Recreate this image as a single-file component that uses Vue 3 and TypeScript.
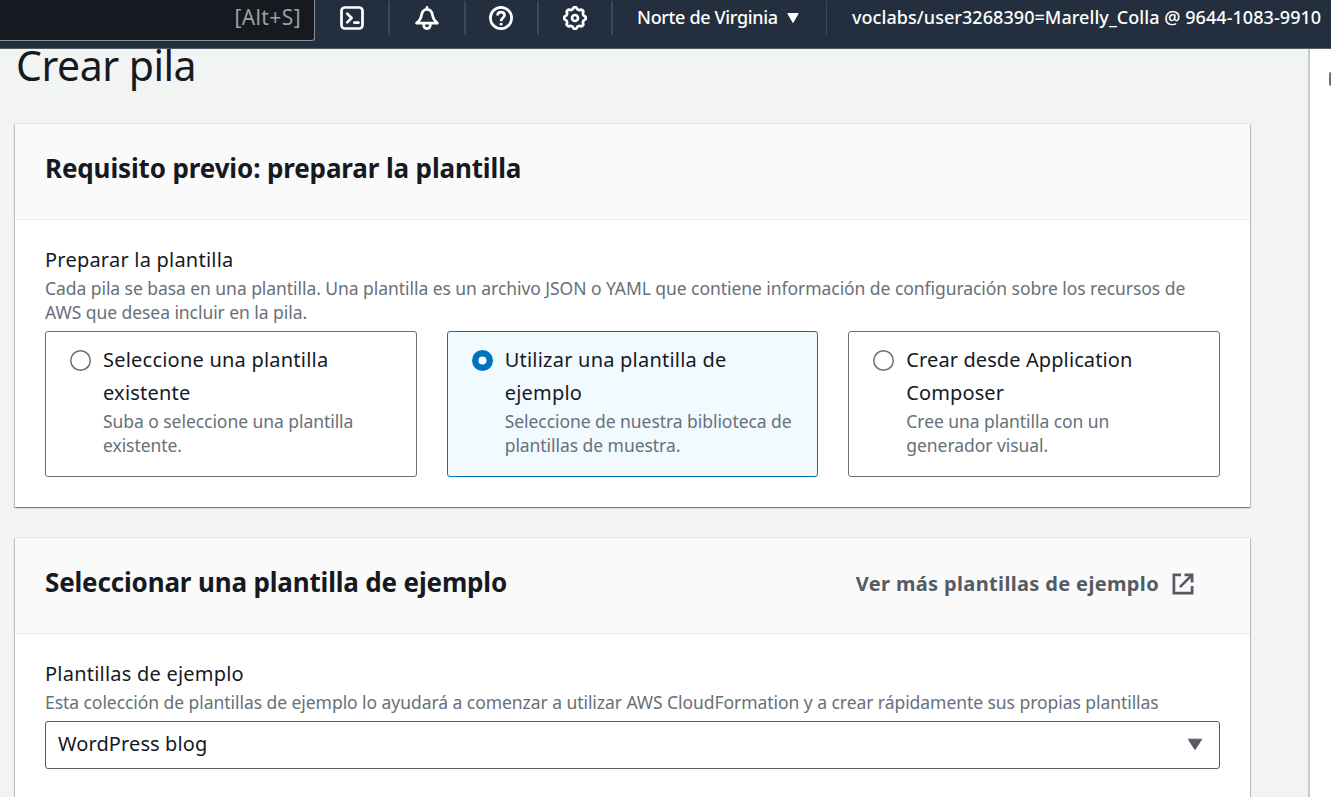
<script setup lang="ts">
import { ref } from 'vue'

interface Option {
  id: string
  title: string[]
  description: string[]
}

const description: string[] = [
  'Cada pila se basa en una plantilla. Una plantilla es un archivo JSON o YAML que contiene información de configuración sobre los recursos de',
  'AWS que desea incluir en la pila.',
]

const options: Option[] = [
  {
    id: 'existing',
    title: ['Seleccione una plantilla', 'existente'],
    description: ['Suba o seleccione una plantilla', 'existente.'],
  },
  {
    id: 'sample',
    title: ['Utilizar una plantilla de', 'ejemplo'],
    description: ['Seleccione de nuestra biblioteca de', 'plantillas de muestra.'],
  },
  {
    id: 'composer',
    title: ['Crear desde Application', 'Composer'],
    description: ['Cree una plantilla con un', 'generador visual.'],
  },
]

const selected = ref('sample')

// Outline of the settings gear: a ring with eight shallow rounded teeth.
const gear = (() => {
  const points: string[] = []
  for (let i = 0; i < 96; i++) {
    const a = (i / 96) * Math.PI * 2
    const r = 9.8 + 0.95 * Math.tanh(2.2 * Math.cos(8 * a))
    points.push(`${(12 + r * Math.cos(a)).toFixed(2)} ${(12 + r * Math.sin(a)).toFixed(2)}`)
  }
  return `M${points.join('L')}Z`
})()
</script>

<template>
  <div class="page">
    <header class="nav">
      <div class="search"><span class="shortcut">[Alt+S]</span></div>
      <div class="tool t1">
        <svg width="24" height="24" viewBox="0 0 24 24" class="line">
          <rect x="1.5" y="1.5" width="21" height="21" rx="3.2" />
          <path d="M7.2 7.600 11.600 12 7.2 16.400M14.300 16.600h4.200" />
        </svg>
      </div>
      <div class="tool t2">
        <svg width="24" height="24" viewBox="0 0 24 24" class="line">
          <path d="M12 1.400v1.800M1.600 17.200h20.800c-4-3-4.400-5.100-5-8.400C16.800 5.200 15 3.300 12 3.300S7.200 5.200 6.600 8.800c-.6 3.300-1 5.400-5 8.400z" />
          <path d="M8.700 18.300c0 2.700 1.100 4.300 3.300 4.300s3.300-1.600 3.300-4.300" />
        </svg>
      </div>
      <div class="tool t3">
        <svg width="24" height="24" viewBox="0 0 24 24" class="line">
          <circle cx="12" cy="12" r="10.600" />
          <path d="M8.600 9.500C8.600 7.200 10 6.200 12 6.200s3.500 1.200 3.500 3.100c0 2.400-3.400 2.800-3.400 5.900" stroke-linecap="butt" />
          <path d="M10.700 18.200h2.800" stroke-linecap="butt" stroke-width="2.400" />
        </svg>
      </div>
      <div class="tool t4">
        <svg width="24" height="24" viewBox="0 0 24 24" class="line">
          <path :d="gear" />
          <circle cx="12" cy="12" r="3" />
        </svg>
      </div>
      <div class="region">
        <span class="region-name">Norte de Virginia</span>
        <svg width="12" height="10" viewBox="0 0 12 10"><path d="M.8.500h10.400L6 9.500z" fill="#fff" stroke="#fff" stroke-linejoin="round" /></svg>
      </div>
      <div class="account"><span>voclabs/user3268390=Marelly_Colla @ 9644-1083-9910</span></div>
    </header>

    <div class="body">
      <main class="content">
        <h1>Crear pila</h1>

        <section class="card first">
          <div class="card-head"><h2 class="h-a">Requisito previo: preparar la plantilla</h2></div>
          <div class="card-body">
            <div class="label">Preparar la plantilla</div>
            <div v-for="(line, i) in description" :key="i" class="hint">{{ line }}</div>
            <div class="options">
              <div
                v-for="o in options"
                :key="o.id"
                class="option"
                :class="[o.id, { active: selected === o.id }]"
                @click="selected = o.id"
              >
                <span class="radio"></span>
                <div>
                  <div v-for="t in o.title" :key="t" class="title">{{ t }}</div>
                  <div v-for="t in o.description" :key="t" class="hint">{{ t }}</div>
                </div>
              </div>
            </div>
          </div>
        </section>

        <section class="card">
          <div class="card-head">
            <h2 class="h-b">Seleccionar una plantilla de ejemplo</h2>
            <a class="more">
              <span>Ver más plantillas de ejemplo</span>
              <svg width="24" height="24" viewBox="0 0 24 24" fill="none" stroke="#545b64" stroke-width="2.700">
                <path d="M10 2.900H2.900v18.200h18.200V14M13.500 2.900h7.600v7.600M20.600 3.400 8.900 15.100" />
              </svg>
            </a>
          </div>
          <div class="card-body">
            <div class="label">Plantillas de ejemplo</div>
            <div class="hint">Esta colección de plantillas de ejemplo lo ayudará a comenzar a utilizar AWS CloudFormation y a crear rápidamente sus propias plantillas</div>
            <div class="select">
              <span>WordPress blog</span>
              <svg width="16" height="13" viewBox="0 0 16 13"><path d="M1.300 1.200h13.400L8 11.700z" fill="#545b64" stroke="#545b64" stroke-linejoin="round" /></svg>
            </div>
          </div>
        </section>
      </main>
      <aside class="panel"><i class="peek"></i></aside>
    </div>
  </div>
</template>

<style>
body {
  overflow: hidden;
  background: #f2f3f3;
}
</style>

<style scoped>
* {
  box-sizing: border-box;
}
.page {
  height: 797px;
  display: flex;
  flex-direction: column;
  overflow: hidden;
  color: #16191f;
  font-family: 'Noto Sans', 'Open Sans', sans-serif;
  font-size: 20px;
  white-space: nowrap;
}
.nav {
  height: 49px;
  flex: none;
  display: flex;
  align-items: flex-start;
  background: #232f3e;
  border-bottom: 1px solid #545b64;
  color: #fff;
}
.search {
  width: 315px;
  height: 41px;
  flex: none;
  padding: 4px 13px 0 0;
  text-align: right;
  background: #161a20;
  border: solid #879596;
  border-width: 0 1px 1px 0;
  border-radius: 0 0 3px 0;
}
.shortcut {
  color: #95a5a6;
  font-size: 21px;
  line-height: 27px;
  letter-spacing: 0.4px;
}
.tool,
.region {
  height: 34px;
  margin-top: 1px;
  flex: none;
  border-right: 2px solid #414750;
}
.tool {
  padding: 5px 0 0 24px;
}
.tool svg {
  display: block;
}
.line {
  fill: none;
  stroke: #fff;
  stroke-width: 2.700;
  stroke-linecap: round;
  stroke-linejoin: round;
}
.t1 {
  width: 75px;
  padding-left: 25px;
}
.t2 {
  width: 76px;
  padding-left: 25px;
}
.t3 {
  width: 73px;
  padding-left: 23px;
}
.t4 {
  width: 74px;
}
.region {
  width: 214px;
  border-right-width: 1px;
  padding: 0 0 0 24px;
  display: flex;
  align-items: center;
}
.region-name {
  width: 150px;
  padding-bottom: 2px;
  font-size: 18px;
  font-weight: 500;
  letter-spacing: -0.340px;
}
.account {
  padding-left: 25px;
  font-size: 18px;
  font-weight: 500;
  line-height: 34px;
  letter-spacing: 0.060px;
}
.body {
  flex: 1;
  min-height: 0;
  display: flex;
  background: #f2f3f3;
}
.content {
  width: 1308px;
  flex: none;
  padding-left: 15px;
}
h1,
h2 {
  margin: 0;
}
h1 {
  height: 75px;
  padding-left: 1px;
  font-size: 41px;
  font-weight: 400;
  line-height: 32px;
  letter-spacing: -0.5px;
}
.card {
  width: 1235px;
  height: 383px;
  margin-bottom: 31px;
  background: #fff;
  box-shadow: 0 1px 1px 0 rgba(0, 28, 36, 0.3), 1px 1px 1px 0 rgba(0, 28, 36, 0.15), -1px 1px 1px 0 rgba(0, 28, 36, 0.15), 0 0 1px 0 rgba(0, 28, 36, 0.3);
}
.card-head {
  height: 96px;
  padding: 0 55px 4px 30px;
  display: flex;
  align-items: center;
  justify-content: space-between;
  background: #fafafa;
  border-bottom: 1px solid #eaeded;
}
h2 {
  padding-bottom: 3px;
  font-size: 26px;
  font-weight: 700;
}
.h-a {
  letter-spacing: -0.130px;
}
.h-b {
  letter-spacing: -0.160px;
}
.card-body {
  padding: 23px 30px 0;
}
.label,
.title {
  font-size: 20px;
  line-height: 33px;
  letter-spacing: 0.220px;
}
.composer .title {
  letter-spacing: 0.100px;
}
.hint {
  color: #687078;
  font-size: 17.500px;
  line-height: 24px;
  letter-spacing: -0.056px;
}
.options {
  display: flex;
  gap: 30px;
  margin-top: 7px;
}
.option {
  flex: 1;
  height: 146px;
  padding: 11px 24px 0;
  display: flex;
  gap: 12px;
  border: 1px solid #687078;
  border-radius: 3px;
}
.option.active {
  border-color: #0073bb;
  background: #f1faff;
}
.radio {
  width: 21px;
  height: 21px;
  flex: none;
  margin-top: 7px;
  border-radius: 50%;
  background: #fff;
  box-shadow: inset 0 0 0 1.500px #687078;
}
.active .radio {
  box-shadow: inset 0 0 0 6.500px #0073bb;
}
.more {
  display: flex;
  align-items: center;
  gap: 12px;
  color: #545b64;
  font-size: 20px;
  font-weight: 700;
  letter-spacing: 0.350px;
}
.select {
  height: 48px;
  margin-top: 7px;
  padding: 0 16px 3px 12px;
  display: flex;
  align-items: center;
  justify-content: space-between;
  border: 1px solid #545b64;
  border-radius: 3px;
  letter-spacing: 0.100px;
}
.select svg {
  margin-top: 2px;
}
.panel {
  flex: 1;
  position: relative;
  background: #fff;
  border-left: 2px solid #c4c9c9;
}
.peek {
  position: absolute;
  right: 0;
  top: 23px;
  width: 2px;
  height: 14px;
  background: #687078;
  border-radius: 2px 0 0 2px;
}
</style>
